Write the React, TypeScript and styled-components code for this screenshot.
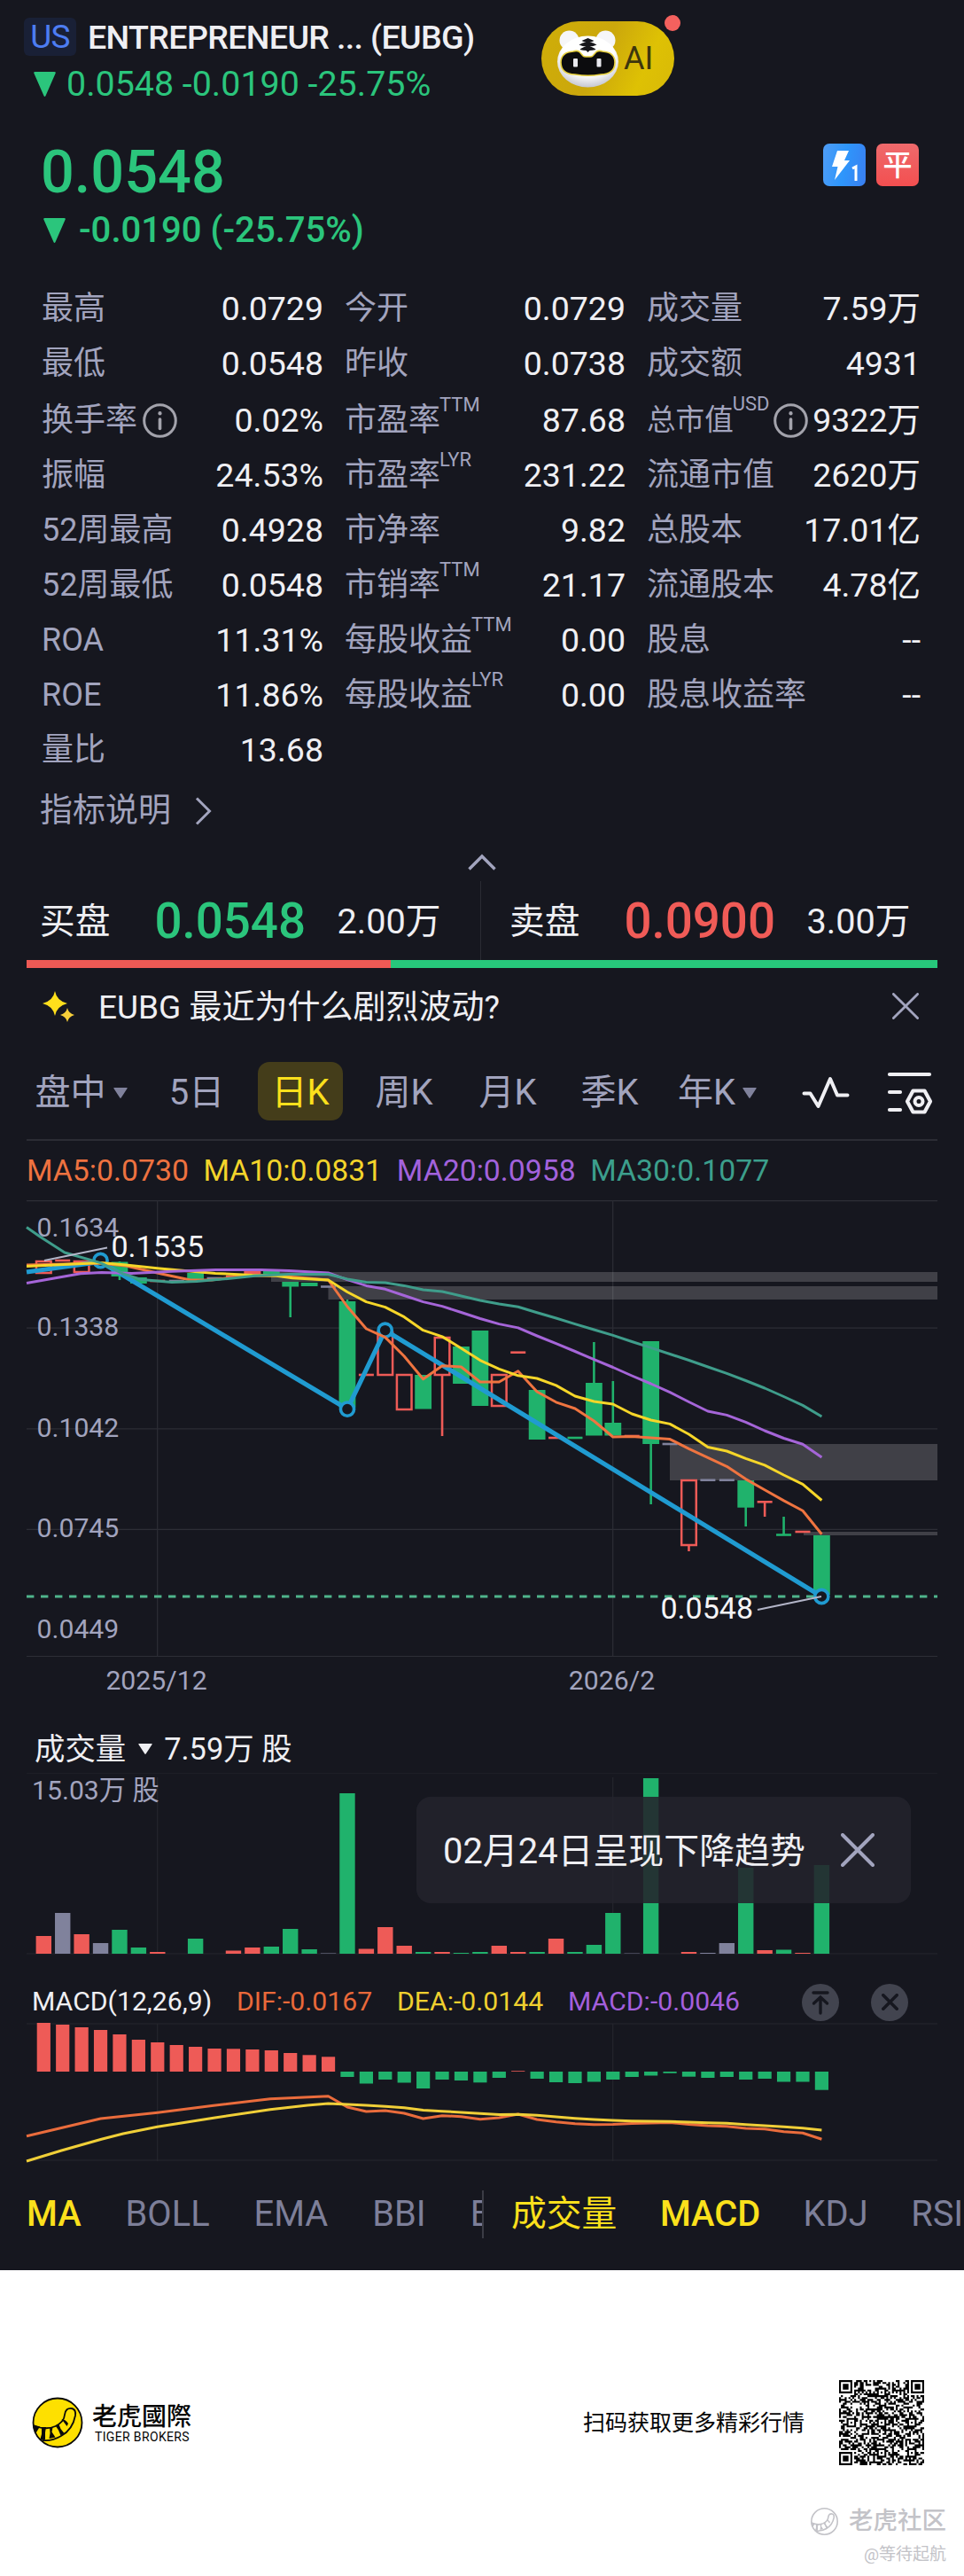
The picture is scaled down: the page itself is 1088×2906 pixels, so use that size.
import styled, {createGlobalStyle, css} from "styled-components";
import {FC, Fragment} from "react";

const GREEN = "#2bc57c";
const RED = "#f05b57";
const UP = "#ee5b57";
const DOWN = "#20b26c";
const FLAT = "#80829c";
const LABEL = "#a2a4be";
const TEXT = "#efeff3";
const BG = "#16171f";

const GlobalStyle = createGlobalStyle`
  body {
    margin: 0;
    background: #fff;
    font-family: Roboto, "Noto Sans CJK SC", sans-serif;
  }

  * {
    box-sizing: border-box;
  }

  svg {
    display: block;
    flex-shrink: 0;
  }
`;

const Page = styled.div`
  width: 1088px;
  height: 2906px;
  overflow: hidden;
  display: flex;
  flex-direction: column;
  background: #fff;
`;

const Screen = styled.main`
  height: 2561px;
  flex-shrink: 0;
  display: flex;
  flex-direction: column;
  background: ${BG};
  color: ${TEXT};
  line-height: 1;
  white-space: nowrap;
`;

/* ---------- header ---------- */

const Header = styled.header`
  height: 135px;
  display: flex;
  align-items: flex-start;
  padding: 18px 27px 0;
`;

const HeaderInfo = styled.div`
  width: 584px;
`;

const TitleRow = styled.div`
  height: 46px;
  display: flex;
  align-items: center;
  gap: 13px;
  font-size: 37.6px;
  font-weight: 500;
  letter-spacing: -0.65px;
`;

const Title = styled.span`
  padding-top: 3px;
`;

const Market = styled.span`
  width: 59px;
  height: 43px;
  display: flex;
  align-items: center;
  justify-content: center;
  border-radius: 6px;
  background: #192036;
  color: #4d7df2;
  font-size: 37px;
  font-weight: 400;
`;

const Change = styled.div<{ $size: number; $bold?: boolean }>`
  display: flex;
  align-items: center;
  color: ${GREEN};
  font-size: ${p => p.$size}px;
  font-weight: ${p => p.$bold ? 500 : 400};
`;

const HeaderChange = styled(Change)`
  height: 62px;
  gap: 12px;
  padding-left: 11px;
`;

const AiButton = styled.div`
  position: relative;
  width: 150px;
  height: 84px;
  margin-top: 6px;
  border-radius: 42px;
  display: flex;
  align-items: center;
  gap: 4px;
  padding-left: 16px;
  background: linear-gradient(115deg, #cfae08 0%, #cba70c 45%, #dec104 75%, #d8b908 100%);
  color: #3d360d;
  font-size: 36px;
`;

const Dot = styled.i`
  position: absolute;
  top: -7px;
  right: -7px;
  width: 18px;
  height: 18px;
  border-radius: 50%;
  background: #f4615e;
`;

/* ---------- price ---------- */

const PriceBlock = styled.section`
  height: 182px;
  display: flex;
  justify-content: space-between;
  padding: 27px 51px 0 46px;
`;

const Price = styled.div`
  height: 63px;
  display: flex;
  align-items: center;
  padding-top: 1px;
  color: ${GREEN};
  font-size: 66.6px;
  font-weight: 500;
`;

const PriceChange = styled(Change)`
  height: 70px;
  gap: 15px;
  padding-left: 3px;
`;

const Badges = styled.div`
  display: flex;
  gap: 12px;
`;

const Badge = styled.span<{ $bg: string }>`
  width: 48px;
  height: 48px;
  display: flex;
  align-items: center;
  justify-content: center;
  border-radius: 7px;
  background: ${p => p.$bg};
  color: #fff;
  font-size: 33px;
  font-weight: 500;
`;

/* ---------- key figures ---------- */

const Stats = styled.section`
  display: grid;
  grid-template-columns: 318px 317px 309px;
  column-gap: 24px;
  padding-left: 47px;
`;

const Stat = styled.div<{ $gap?: boolean }>`
  height: 62px;
  margin-top: ${p => p.$gap ? 2 : 0}px;
  display: flex;
  align-items: center;
  justify-content: space-between;
`;

const StatLabel = styled.span<{ $small?: boolean }>`
  display: flex;
  align-items: center;
  color: ${LABEL};
  font-size: ${p => p.$small ? 32.6 : 36}px;

  svg {
    margin: 0 -2px 0 ${p => p.$small ? 4 : 6}px;
  }
`;

const Sup = styled.sup`
  align-self: flex-start;
  margin: -10px 0 0 -1px;
  font-size: 22px;
  line-height: 22px;
`;

const StatValue = styled.span`
  padding-top: 1px;
  color: ${TEXT};
  font-size: 37.5px;
`;

const HelpLink = styled.div`
  height: 74px;
  display: flex;
  align-items: center;
  gap: 27px;
  padding: 1px 0 0 45px;
  color: ${LABEL};
  font-size: 37px;
`;

const Collapse = styled.div`
  height: 43px;
  display: flex;
  justify-content: center;
  padding-top: 12px;
`;

/* ---------- bid / ask ---------- */

const Quotes = styled.section`
  height: 89px;
  display: grid;
  grid-template-columns: 543px 544px;
`;

const Quote = styled.div<{ $color: string; $divided?: boolean }>`
  display: flex;
  align-items: center;
  padding: 2px 0 0 ${p => p.$divided ? 45 : 32}px;
  font-size: 39.7px;

  ${p => p.$divided && css`
    border-right: 1px solid #2a2b33;
  `}

  b {
    width: 206px;
    margin-left: 50px;
    color: ${p => p.$color};
    font-size: 54.7px;
    font-weight: 500;
  }
`;

const RatioBar = styled.div`
  height: 9px;
  margin: 0 30px;
  display: flex;
  background: #27c87b;

  &::before {
    content: "";
    width: 40%;
    background: #ee5a55;
  }
`;

const Question = styled.section`
  height: 85px;
  display: flex;
  align-items: center;
  padding: 0 51px 0 48px;
  font-size: 37px;

  span {
    flex: 1;
    margin-left: 26px;
    padding-top: 3px;
  }
`;

/* ---------- period tabs ---------- */

const Periods = styled.nav`
  height: 110px;
  margin: 0 30px;
  display: flex;
  align-items: center;
  border-bottom: 2px solid #2b2c34;
`;

const Period = styled.span<{ $w: number; $active?: boolean }>`
  width: ${p => p.$w}px;
  height: 66px;
  display: flex;
  flex-shrink: 0;
  align-items: center;
  justify-content: center;
  gap: 8px;
  padding-top: 3px;
  border-radius: 13px;
  font-size: 40px;
  color: ${p => p.$active ? "#fbe01c" : LABEL};
  background: ${p => p.$active ? "#443d1a" : "none"};
`;

const ChartTools = styled.div`
  flex: 1;
  display: flex;
  align-items: center;
  justify-content: flex-end;
  gap: 42px;
  padding: 4px 5px 0 0;
`;

const Legend = styled.div`
  height: 67px;
  display: flex;
  align-items: center;
  gap: 16.5px;
  padding-left: 30px;
  font-size: 33.8px;
`;

const Tint = styled.span<{ $color: string }>`
  color: ${p => p.$color};
`;

const AxisText = styled.text`
  font-size: 30.2px;
  fill: ${LABEL};
`;

const MarkText = styled.text`
  font-size: 34px;
  fill: #f4f4f6;
`;

/* ---------- volume / macd ---------- */

const VolumeTitle = styled.div`
  height: 69px;
  display: flex;
  align-items: center;
  gap: 13.5px;
  padding: 15px 0 0 39px;
  font-size: 34.4px;
`;

const VolumePanel = styled.div`
  position: relative;
`;

const Toast = styled.div`
  position: absolute;
  left: 470px;
  top: 27px;
  width: 558px;
  height: 120px;
  display: flex;
  align-items: center;
  justify-content: space-between;
  padding: 0 41px 0 30px;
  border-radius: 16px;
  background: rgba(35, 35, 44, 0.88);
  font-size: 39.9px;

  span {
    padding-top: 3px;
  }
`;

const MacdHeader = styled.div`
  height: 73px;
  display: flex;
  align-items: center;
  padding: 24px 63px 0 36px;
  font-size: 30.2px;
`;

const MacdName = styled.span`
  width: 231px;
`;

const MacdValue = styled(Tint)<{ $w: number }>`
  width: ${p => p.$w}px;
`;

const RoundButton = styled.span`
  width: 42px;
  height: 42px;
  margin-left: 36px;
  display: flex;
  align-items: center;
  justify-content: center;
  border-radius: 50%;
  background: #42444f;
`;

const MacdActions = styled.div`
  flex: 1;
  display: flex;
  justify-content: flex-end;
`;

const Indicators = styled.nav`
  flex: 1;
  display: flex;
  align-items: center;
  padding-bottom: 11px;
`;

const IndicatorList = styled.div<{ $w: number; $start: number; $line?: boolean }>`
  width: ${p => p.$w}px;
  height: 54px;
  display: flex;
  align-items: center;
  gap: ${p => p.$line ? 50 : 48.5}px;
  padding-left: ${p => p.$start}px;
  overflow: hidden;
  border-right: ${p => p.$line ? "2px solid #3b3c45" : "none"};
  font-size: 39.8px;
`;

const Indicator = styled.span<{ $active?: boolean; $bold?: boolean }>`
  flex-shrink: 0;
  color: ${p => p.$active ? "#fbe01c" : "#7d7f99"};
  font-weight: ${p => p.$bold ? 500 : 400};
`;

/* ---------- footer ---------- */

const Footer = styled.footer`
  flex: 1;
  display: flex;
  flex-direction: column;
  color: #050505;
  line-height: 1;
  white-space: nowrap;
`;

const FooterRow = styled.div`
  height: 257px;
  display: flex;
  align-items: center;
  padding: 87px 45px 0 36px;
`;

const Brand = styled.div`
  flex: 1;
  display: flex;
  align-items: center;
  gap: 10px;
`;

const BrandName = styled.div`
  font-family: "Noto Sans CJK TC", sans-serif;
  font-size: 28px;
  font-weight: 500;
  line-height: 28px;

  small {
    display: block;
    margin: 4px 0 0 3px;
    font-family: Roboto, sans-serif;
    font-size: 14px;
    font-weight: 400;
    letter-spacing: 0.35px;
    line-height: 14px;
  }
`;

const ScanHint = styled.span`
  margin-right: 39px;
  font-size: 25px;
`;

const Watermark = styled.div`
  display: flex;
  flex-direction: column;
  align-items: flex-end;
  padding: 9px 20px 0 0;
  color: #c3c3c8;
  font-size: 19px;
`;

const WatermarkBrand = styled.div`
  height: 34px;
  margin-bottom: 11px;
  display: flex;
  align-items: center;
  gap: 12px;
  font-size: 27.5px;
  font-weight: 500;
`;

/* ---------- data ---------- */

type StatItem = { label: string; value: string; sup?: string; info?: boolean; small?: boolean } | null;

const stats: StatItem[] = [
    {label: "最高", value: "0.0729"}, {label: "今开", value: "0.0729"}, {label: "成交量", value: "7.59万"},
    {label: "最低", value: "0.0548"}, {label: "昨收", value: "0.0738"}, {label: "成交额", value: "4931"},
    {label: "换手率", value: "0.02%", info: true}, {label: "市盈率", sup: "TTM", value: "87.68"},
    {label: "总市值", sup: "USD", value: "9322万", info: true, small: true},
    {label: "振幅", value: "24.53%"}, {label: "市盈率", sup: "LYR", value: "231.22"}, {label: "流通市值", value: "2620万"},
    {label: "52周最高", value: "0.4928"}, {label: "市净率", value: "9.82"}, {label: "总股本", value: "17.01亿"},
    {label: "52周最低", value: "0.0548"}, {label: "市销率", sup: "TTM", value: "21.17"}, {label: "流通股本", value: "4.78亿"},
    {label: "ROA", value: "11.31%"}, {label: "每股收益", sup: "TTM", value: "0.00"}, {label: "股息", value: "--"},
    {label: "ROE", value: "11.86%"}, {label: "每股收益", sup: "LYR", value: "0.00"}, {label: "股息收益率", value: "--"},
    {label: "量比", value: "13.68"}, null, null,
];

// x of the n-th trading day, shared by all three charts
const dayX = (i: number) => 49.3 + i * 21.417;

type Kind = "u" | "d" | "f";
// [day, kind, body top, body bottom, wick top, wick bottom]
type Candle = [number, Kind, number, number, number?, number?];

const candles: Candle[] = [
    [0, "u", 1422, 1437], [1, "u", 1422, 1422], [2, "u", 1422, 1436], [3, "f", 1423, 1423],
    [4, "d", 1423.5, 1440, 1423, 1444], [5, "d", 1441, 1448], [6, "u", 1445, 1445], [7, "f", 1445, 1445],
    [8, "d", 1436, 1444], [9, "f", 1442, 1442], [10, "u", 1440, 1440], [11, "u", 1434, 1437],
    [12, "d", 1434, 1439], [13, "d", 1446, 1451.5, 1446, 1486], [14, "d", 1447, 1451], [15, "f", 1451.5, 1451.5],
    [16, "d", 1468, 1588, 1466, 1588], [17, "u", 1551, 1551], [18, "u", 1502, 1552], [19, "u", 1550, 1591],
    [20, "d", 1551, 1589.5], [21, "u", 1508, 1552, 1552, 1620], [22, "d", 1519, 1561], [23, "d", 1501, 1586],
    [24, "u", 1550, 1587], [25, "u", 1525.7, 1525.7], [26, "d", 1568, 1624], [27, "u", 1622, 1622],
    [28, "d", 1622, 1622], [29, "d", 1560, 1619.5, 1514, 1619], [30, "d", 1605, 1619.5, 1558, 1619],
    [31, "u", 1620, 1620], [32, "d", 1513, 1629, 1513, 1697], [33, "f", 1629, 1629],
    [34, "u", 1669, 1744, 1744, 1750], [35, "f", 1669.7, 1669.7], [36, "f", 1669.7, 1669.7],
    [37, "d", 1670, 1700.7, 1670, 1722], [38, "u", 1694.3, 1694.3, 1694, 1711], [39, "d", 1731.5, 1731.5, 1711, 1731],
    [40, "u", 1728, 1728], [41, "d", 1732, 1799],
];

// volume bars as [kind, height]
const volumes: [Kind, number][] = [
    ["u", 20], ["f", 46], ["u", 22], ["f", 12], ["d", 27], ["d", 7], ["u", 2], ["f", 0], ["d", 17], ["f", 0],
    ["u", 3.5], ["u", 7], ["d", 8], ["d", 28], ["d", 5], ["f", 0.5], ["d", 181], ["u", 5.5], ["u", 30], ["u", 9],
    ["d", 2], ["u", 2], ["d", 1], ["d", 2], ["u", 9], ["u", 2], ["d", 2], ["u", 17], ["d", 2], ["d", 10],
    ["d", 46], ["f", 0.4], ["d", 198], ["f", 0], ["u", 2], ["f", 1], ["f", 12], ["d", 97], ["u", 4], ["d", 4.5],
    ["u", 1], ["d", 100],
];

const macdBars = [
    55, 53, 50, 47, 42, 36, 33, 30, 28, 26, 25.7, 25, 24, 21, 18.7, 16.7, -6, -13.5, -9, -12.5, -19, -9, -10,
    -12.3, -7, 0.8, -8, -12, -13, -11.5, -9, -6, -4.5, -1.8, -5.7, -7, -6, -9, -8, -11.5, -11.5, -20.7,
];

// a curve given freely up to day 15, then by one value for each day
const curve = (head: string, tail: number[], from = 16) =>
    head + " " + tail.map((y, i) => `${dayX(from + i).toFixed(1)},${y}`).join(" ");

const ma5 = curve("30,1427 113.5,1425 142,1428 182,1437 215,1444 239,1444 277,1439 312,1439 370.5,1444", [
    1474, 1499, 1508.6, 1530, 1555.7, 1540.7, 1542, 1559, 1559, 1546.8, 1570, 1581.8, 1589, 1603, 1621, 1620.4,
    1622, 1623.6, 1634.3, 1644.3, 1654.3, 1668.6, 1680.7, 1692.9, 1704.3, 1730.7]);
const ma10 = curve("30,1428.5 113.5,1424.6 142,1427 180,1431 243,1436.4 284.5,1438.6 312,1439.3 330,1441.8 370.5,1444", [
    1457.5, 1468.6, 1474.6, 1485.7, 1500.7, 1507.9, 1521, 1534.6, 1544.3, 1551.8, 1555, 1562.9, 1575, 1581, 1584,
    1595, 1602, 1606.4, 1618, 1632.5, 1637, 1645.4, 1652.9, 1664, 1674.3, 1692.5]);
const ma20 = curve("30,1447.5 62.5,1441.8 91,1436.8 114.5,1435.4 149,1436.4 194,1434.3 243,1432.5 295,1432.5 326,1433.6 370.5,1436", [
    1443.6, 1450.4, 1454.3, 1461.5, 1468.6, 1473.6, 1480.5, 1487.5, 1493.6, 1497.9, 1507, 1515.7, 1524.5, 1533.6,
    1542.5, 1552, 1561, 1570.7, 1581.5, 1592, 1596.4, 1604.3, 1614, 1622.5, 1629.3, 1644]);
const ma30 = curve("30,1384.6 45,1395 73,1413 113.5,1424.6 139,1437 160,1443.6 194,1446.4 222,1445.4 257,1442.5 288,1439.3 326,1437.5 370.5,1437.5", [
    1442.9, 1446.4, 1447, 1450.4, 1455, 1457, 1462, 1467, 1471, 1474.3, 1480.7, 1487, 1493.6, 1500, 1506.4, 1513.5,
    1520.4, 1527.5, 1534.5, 1542, 1549.3, 1557.5, 1566, 1575.5, 1585.4, 1598]);

const dif = curve("30,2409.7 113.6,2390 177.8,2383.3 241,2375.3 305,2367.7 370.5,2364.7", [
    2377, 2382, 2381, 2384, 2390, 2386.7, 2387.7, 2390.7, 2389, 2385, 2391, 2393.7, 2395.7, 2396.7, 2396.5, 2395.5,
    2395, 2394.5, 2396.5, 2398, 2398.7, 2401, 2401.7, 2404.7, 2406.3, 2413.3]);
const dea = curve("30,2438 69.4,2426 114.5,2413.3 139,2407 177.6,2399.3 241,2389.3 305,2379.7 347,2375 370.5,2373", [
    2374, 2375, 2376.3, 2377.7, 2380.5, 2381.7, 2383, 2384.3, 2385.5, 2385.3, 2386.3, 2388, 2389.7, 2391, 2392,
    2392.7, 2393, 2393.3, 2394, 2394.7, 2395.3, 2396.7, 2398, 2399.3, 2400.7, 2403]);

const kindColor = {u: UP, d: DOWN, f: FLAT};

/* ---------- icons ---------- */

const Triangle: FC<{ w: number; h: number; color: string }> = ({w, h, color}) => (
    <svg width={w} height={h} viewBox="0 0 24 28" preserveAspectRatio="none">
        <path d="M1.5 0h21q2 0 1 2L13 27q-1 2-2 0L.5 2q-1-2 1-2z" fill={color}/>
    </svg>
);

const InfoIcon = () => (
    <svg width="39" height="39" viewBox="0 0 39 39" fill="none" stroke="#a3a3ac" strokeLinecap="round">
        <circle cx="19.500" cy="19.500" r="17.800" strokeWidth="3"/>
        <path d="M19.500 18v10.500" strokeWidth="3.600"/>
        <path d="M19.500 11.200v.3" strokeWidth="4.200"/>
    </svg>
);

const CloseIcon: FC<{ size: number; width: number; color?: string }> = ({size, width, color = LABEL}) => (
    <svg width={size} height={size} viewBox={`0 0 ${size} ${size}`} stroke={color} strokeWidth={width} strokeLinecap="round">
        <path d={`M${width / 2} ${width / 2}L${size - width / 2} ${size - width / 2}M${size - width / 2} ${width / 2}L${width / 2} ${size - width / 2}`}/>
    </svg>
);

const TigerBot = () => (
    <svg width="73" height="68" viewBox="0 0 73 68">
        <defs>
            <radialGradient id="face" cx="50%" cy="35%" r="70%">
                <stop offset="0.6" stopColor="#fff"/>
                <stop offset="1" stopColor="#b9bbc6"/>
            </radialGradient>
        </defs>
        <ellipse cx="15.500" cy="13.500" rx="11" ry="11" fill="#f6f6f8"/>
        <ellipse cx="56.500" cy="13.500" rx="11" ry="11" fill="#f6f6f8"/>
        <ellipse cx="36.500" cy="37.500" rx="34.500" ry="29" fill="url(#face)"/>
        <path d="M36.500 11l7 3q-3 1.500-5 1.500 4 .5 8 3-4 2-8 2 5 1 7 3.500-4 1-7 1l-2 2-2-2q-3 0-7-1 2-2.500 7-3.500-4 0-8-2 4-2.500 8-3-2 0-5-1.500z" fill="#17171b"/>
        <path d="M20 26q4-1.500 7 .5l4 4.500q1 1 3 1h5q2 0 3-1l4-4.500q3-2 7-.5 14 1 14 12.500 0 13-16 13.500-14 2.500-29 0Q6 51.500 6 38.500 6 27 20 26z" fill="#0c0c0e" stroke="#e5cf3e" strokeWidth="1.600"/>
        <rect x="20" y="34" width="5" height="9.500" rx="1" fill="#e9e9ee"/>
        <rect x="46.500" y="34" width="5" height="9.500" rx="1" fill="#e9e9ee"/>
    </svg>
);

const BoltOne = () => (
    <svg width="48" height="48" viewBox="0 0 48 48">
        <path d="M16 8h13l-5 11h6L13 41l3.500-15H10z" fill="#fff"/>
        <path d="M33 28l4-2v16" fill="none" stroke="#fff" strokeWidth="3"/>
    </svg>
);

const Sparkles = () => (
    <svg width="37" height="36" viewBox="0 0 37 36" fill="#ffdf1c">
        <path d="M14 1q2 11 14 14-12 3-14 14-2-11-14-14 12-3 14-14z"/>
        <path d="M28 20q1.300 6 8 8-6.700 2-8 8-1.300-6-8-8 6.700-2 8-8z" fill="#f7cf3a"/>
    </svg>
);

const WaveIcon = () => (
    <svg width="54" height="38" viewBox="0 0 54 38" fill="none" stroke={TEXT} strokeWidth="4" strokeLinecap="round" strokeLinejoin="round">
        <path d="M2.500 19.500h7l9 14.500L32 3l8 18.500h11.500"/>
    </svg>
);

const ChartSettingsIcon = () => (
    <svg width="52" height="50" viewBox="0 0 52 50" fill="none" stroke={TEXT} strokeWidth="4.200" strokeLinecap="round" strokeLinejoin="round">
        <path d="M3 4h45M3 24h12M3 44h12"/>
        <path d="M29.500 22.500h13l6.500 12-6.500 12h-13L23 34.500z"/>
        <circle cx="36" cy="34.500" r="4.500" strokeWidth="4"/>
    </svg>
);

const ToTopIcon = () => (
    <svg width="24" height="28" viewBox="0 0 24 28" fill="none" stroke={BG} strokeWidth="3.400" strokeLinecap="round">
        <path d="M4 3h16M12 9v17M4.500 15L12 8l7.500 7"/>
    </svg>
);

const TigerTail: FC<{ size: number; ghost?: boolean }> = ({size, ghost}) => (
    <svg width={size} height={size} viewBox="0 0 58 58" fill="none" stroke={ghost ? "#c3c3c8" : "#0a0a0a"} strokeWidth={ghost ? 3 : 1.8}>
        <circle cx="29" cy="29" r="27.500" fill={ghost ? "none" : "#fee000"}/>
        <path d="M1.500 32q14 6 25 1 10-5 10.500-13 1-8 8-7 5 1 4 8-3 16-16 23-10 6-21 5"/>
        <path
            d="M1 32l8 1.500-5 8zM11 34h5l-1 6 0 8-6 1 2-7zM20 34.500h3.500l-1 5 4 6-7 1.500 1-6zM27 33l3.500-2 2 5 4 5-4 2.500-2.500-6zM33.500 25q4 0 7.500 5l-1.500 3q-3-4-6-8z"
            fill={ghost ? "#c3c3c8" : "#0a0a0a"} stroke="none"
        />
    </svg>
);

/* ---------- qr ---------- */

const QR_SIZE = 45;

const inSquare = (x: number, y: number, cx: number, cy: number, r: number) => {
    const d = Math.max(Math.abs(x - cx), Math.abs(y - cy));
    return d > r ? null : d;
};

const qrModule = (x: number, y: number) => {
    for (const [cx, cy] of [[3, 3], [41, 3], [3, 41]]) {
        const d = inSquare(x, y, cx, cy, 4);
        if (d !== null) return d !== 4 && d !== 2;
    }
    for (const [cx, cy] of [[22, 6], [6, 22], [22, 22], [38, 22], [22, 38], [38, 38]]) {
        const d = inSquare(x, y, cx, cy, 2);
        if (d !== null) return d !== 1;
    }
    if (x === 6) return y % 2 === 0;
    if (y === 6) return x % 2 === 0;
    const n = Math.sin(x * 12.9898 + y * 78.233) * 43758.5453;
    return n - Math.floor(n) > 0.5;
};

const QrCode = () => {
    let d = "";
    for (let y = 0; y < QR_SIZE; y++) {
        for (let x = 0; x < QR_SIZE; x++) {
            if (qrModule(x, y)) d += `M${x} ${y}h1v1h-1z`;
        }
    }
    return (
        <svg width="96" height="96" viewBox={`0 0 ${QR_SIZE} ${QR_SIZE}`}>
            <path d={d} fill="#000"/>
        </svg>
    );
};

/* ---------- charts ---------- */

const CandleShape: FC<{ candle: Candle }> = ({candle}) => {
    const [day, kind, top, bottom, wickTop, wickBottom] = candle;
    const x = dayX(day);
    const color = kindColor[kind];
    const flat = bottom - top < 1;
    return (
        <g>
            {wickTop !== undefined && <path d={`M${x} ${wickTop}V${wickBottom}`} stroke={color} strokeWidth="2.6"/>}
            {flat && <rect x={x - 8.5} y={top - 1.3} width="17" height="2.6" fill={color}/>}
            {!flat && kind === "u" && (
                <rect x={x - 8.3} y={top + 1} width="16.6" height={Math.max(bottom - top - 2, 1)} fill="none" stroke={color} strokeWidth="2.5"/>
            )}
            {!flat && kind === "d" && <rect x={x - 9.4} y={top} width="18.8" height={bottom - top} fill={color}/>}
        </g>
    );
};

const PriceChart = () => (
    <svg width="1088" height="577" viewBox="0 1354 1088 577">
        <g stroke="#2d2e36" strokeWidth="1.2">
            <path d="M30 1354.600H1058M30 1498.200H1058M30 1611.800H1058M30 1725.400H1058M30 1868.500H1058"/>
            <path d="M177.700 1354V1868M691.700 1354V1868"/>
        </g>
        <g fill="rgba(255, 255, 255, 0.18)">
            <rect x="306" y="1435" width="752" height="11"/>
            <rect x="370.5" y="1451" width="687.5" height="15"/>
            <rect x="756" y="1629" width="302" height="41"/>
            <rect x="907" y="1728" width="151" height="4"/>
        </g>
        <path d="M30 1801H1058" stroke="#4fb58c" strokeWidth="2.8" strokeDasharray="8.4 7.6"/>
        <AxisText x="41.500" y="1394.5">0.1634</AxisText>
        <AxisText x="41.500" y="1507">0.1338</AxisText>
        <AxisText x="41.500" y="1620.500">0.1042</AxisText>
        <AxisText x="41.500" y="1734">0.0745</AxisText>
        <AxisText x="41.500" y="1847.500">0.0449</AxisText>
        {candles.map(c => <CandleShape key={c[0]} candle={c}/>)}
        <polyline points="30,1435 113.500,1423.500 392,1589.600 434.700,1500.700 927.300,1801" fill="none" stroke="#209bd1" strokeWidth="5.200"/>
        <g fill={BG} stroke="#209bd1" strokeWidth="3.6">
            <circle cx="113.500" cy="1422" r="7.600"/>
            <circle cx="392" cy="1589.600" r="7.600"/>
            <circle cx="434.700" cy="1500.700" r="7.600"/>
            <circle cx="927.300" cy="1801" r="7.600"/>
        </g>
        <g fill="none" strokeWidth="3" strokeLinejoin="round">
            <polyline points={ma5} stroke="#ef7440"/>
            <polyline points={ma10} stroke="#f6d629"/>
            <polyline points={ma20} stroke="#a565d8"/>
            <polyline points={ma30} stroke="#3f9d8b"/>
        </g>
        <path d="M50 1422L121 1407.500M855 1816L927 1801" stroke="#b3b5c8" strokeWidth="2"/>
        <MarkText x="125.500" y="1418">0.1535</MarkText>
        <MarkText x="745.500" y="1826">0.0548</MarkText>
        <AxisText x="176.500" y="1906" textAnchor="middle">2025/12</AxisText>
        <AxisText x="690.500" y="1906" textAnchor="middle">2026/2</AxisText>
    </svg>
);

const VolumeChart = () => (
    <svg width="1088" height="210" viewBox="0 2000 1088 210">
        <path d="M30 2000H1058M30 2204H1058M177.700 2005V2204M691.700 2005V2204" stroke="#25262e" strokeWidth="1.2"/>
        <AxisText x="36" y="2030">15.03万 股</AxisText>
        {volumes.map(([kind, h], i) => (
            <rect key={i} x={dayX(i) - 8.7} y={2204 - h} width="17.4" height={h} fill={kindColor[kind]}/>
        ))}
    </svg>
);

const MacdChart = () => (
    <svg width="1088" height="162" viewBox="0 2283 1088 162" overflow="visible">
        <path d="M30 2283H1058M30 2437H1058M177.700 2283V2438M691.700 2283V2438" stroke="#25262e" strokeWidth="1.2"/>
        {macdBars.map((v, i) => (
            <rect key={i} x={dayX(i) - 7.6} y={v > 0 ? 2337 - v : 2337} width="15.2" height={Math.abs(v)} fill={v > 0 ? UP : DOWN}/>
        ))}
        <g fill="none" strokeWidth="3" strokeLinejoin="round">
            <polyline points={dif} stroke="#ea6c3c"/>
            <polyline points={dea} stroke="#f0cf38"/>
        </g>
    </svg>
);

const App: FC = () => {
    return (
        <Page>
            <GlobalStyle/>
            <Screen>
                <Header>
                    <HeaderInfo>
                        <TitleRow>
                            <Market>US</Market>
                            <Title>ENTREPRENEUR ... (EUBG)</Title>
                        </TitleRow>
                        <HeaderChange $size={39.4}>
                            <Triangle w={25} h={28} color={GREEN}/>
                            <span>0.0548 -0.0190 -25.75%</span>
                        </HeaderChange>
                    </HeaderInfo>
                    <AiButton>
                        <TigerBot/>
                        <span>AI</span>
                        <Dot/>
                    </AiButton>
                </Header>

                <PriceBlock>
                    <div>
                        <Price>0.0548</Price>
                        <PriceChange $size={40.1} $bold>
                            <Triangle w={25} h={28} color={GREEN}/>
                            <span>-0.0190 (-25.75%)</span>
                        </PriceChange>
                    </div>
                    <Badges>
                        <Badge $bg="linear-gradient(100deg, #4f9df6, #2e96fb 50%, #3a7ef0)"><BoltOne/></Badge>
                        <Badge $bg="linear-gradient(180deg, #ee6a6c, #f34f50)">平</Badge>
                    </Badges>
                </PriceBlock>

                <Stats>
                    {stats.map((s, i) => (
                        <Fragment key={i}>
                            {s && (
                                <Stat $gap={i >= 6 && i < 9}>
                                    <StatLabel $small={s.small}>
                                        {s.label}
                                        {s.sup && <Sup>{s.sup}</Sup>}
                                        {s.info && <InfoIcon/>}
                                    </StatLabel>
                                    <StatValue>{s.value}</StatValue>
                                </Stat>
                            )}
                            {!s && <span/>}
                        </Fragment>
                    ))}
                </Stats>

                <HelpLink>
                    <span>指标说明</span>
                    <svg width="20" height="32" viewBox="0 0 20 32" fill="none" stroke={LABEL} strokeWidth="3">
                        <path d="M2 1.500L16.500 16 2 30.500"/>
                    </svg>
                </HelpLink>
                <Collapse>
                    <svg width="32" height="19" viewBox="0 0 32 19" fill="none" stroke={LABEL} strokeWidth="3.4">
                        <path d="M1.500 17.500L16 3l14.500 14.500"/>
                    </svg>
                </Collapse>

                <Quotes>
                    <Quote $color={GREEN} $divided>买盘<b>0.0548</b>2.00万</Quote>
                    <Quote $color={RED}>卖盘<b>0.0900</b>3.00万</Quote>
                </Quotes>
                <RatioBar/>

                <Question>
                    <Sparkles/>
                    <span>EUBG 最近为什么剧烈波动?</span>
                    <CloseIcon size={30} width={2.8}/>
                </Question>

                <Periods>
                    <Period $w={123}>盘中<Triangle w={16} h={12} color="#80829c"/></Period>
                    <Period $w={138}>5日</Period>
                    <Period $w={96} $active>日K</Period>
                    <Period $w={138}>周K</Period>
                    <Period $w={96}>月K</Period>
                    <Period $w={134}>季K</Period>
                    <Period $w={109}>年K<Triangle w={16} h={12} color="#80829c"/></Period>
                    <ChartTools>
                        <WaveIcon/>
                        <ChartSettingsIcon/>
                    </ChartTools>
                </Periods>

                <Legend>
                    <Tint $color="#ee7240">MA5:0.0730</Tint>
                    <Tint $color="#f3d42b">MA10:0.0831</Tint>
                    <Tint $color="#a262dc">MA20:0.0958</Tint>
                    <Tint $color="#3c9f8c">MA30:0.1077</Tint>
                </Legend>
                <PriceChart/>

                <VolumeTitle>
                    <span>成交量</span>
                    <Triangle w={16} h={12} color={TEXT}/>
                    <span>7.59万 股</span>
                </VolumeTitle>
                <VolumePanel>
                    <VolumeChart/>
                    <Toast>
                        <span>02月24日呈现下降趋势</span>
                        <CloseIcon size={38} width={4}/>
                    </Toast>
                </VolumePanel>

                <MacdHeader>
                    <MacdName>MACD(12,26,9)</MacdName>
                    <MacdValue $color="#e9693a" $w={181}>DIF:-0.0167</MacdValue>
                    <MacdValue $color="#efd02f" $w={193}>DEA:-0.0144</MacdValue>
                    <MacdValue $color="#a45fdd" $w={196}>MACD:-0.0046</MacdValue>
                    <MacdActions>
                        <RoundButton><ToTopIcon/></RoundButton>
                        <RoundButton><CloseIcon size={19} width={3.6} color={BG}/></RoundButton>
                    </MacdActions>
                </MacdHeader>
                <MacdChart/>

                <Indicators>
                    <IndicatorList $w={546} $start={30} $line>
                        <Indicator $active $bold>MA</Indicator>
                        <Indicator>BOLL</Indicator>
                        <Indicator>EMA</Indicator>
                        <Indicator>BBI</Indicator>
                        <Indicator>B</Indicator>
                    </IndicatorList>
                    <IndicatorList $w={542} $start={31}>
                        <Indicator $active>成交量</Indicator>
                        <Indicator $active $bold>MACD</Indicator>
                        <Indicator>KDJ</Indicator>
                        <Indicator>RSI</Indicator>
                    </IndicatorList>
                </Indicators>
            </Screen>

            <Footer>
                <FooterRow>
                    <Brand>
                        <TigerTail size={58}/>
                        <BrandName>
                            老虎國際
                            <small>TIGER BROKERS</small>
                        </BrandName>
                    </Brand>
                    <ScanHint>扫码获取更多精彩行情</ScanHint>
                    <QrCode/>
                </FooterRow>
                <Watermark>
                    <WatermarkBrand><TigerTail size={31} ghost/>老虎社区</WatermarkBrand>
                    <span>@等待起航</span>
                </Watermark>
            </Footer>
        </Page>
    );
};

export default App;
